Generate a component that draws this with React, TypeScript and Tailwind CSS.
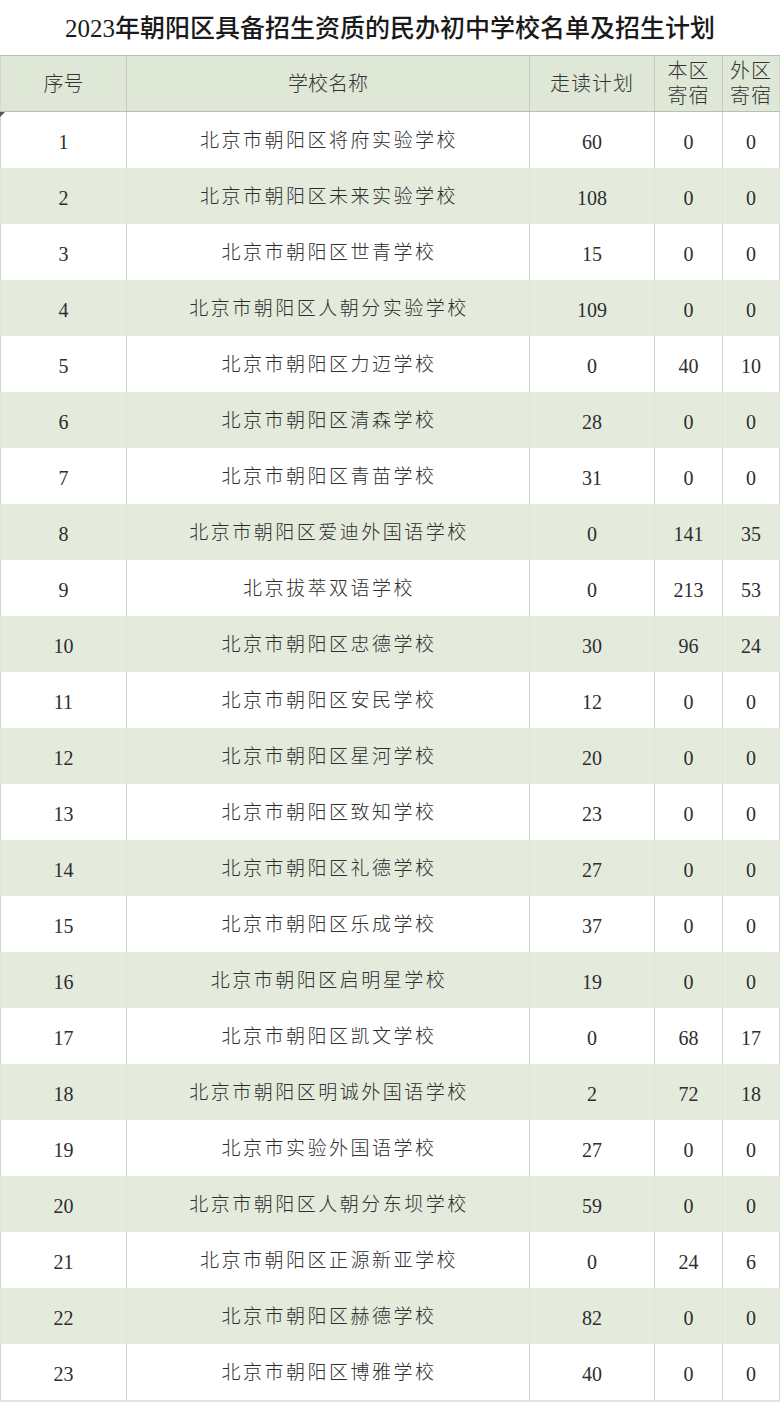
import React from "react";

type Row = [number, string, number, number, number];

const ROWS: Row[] = [
  [1, "北京市朝阳区将府实验学校", 60, 0, 0],
  [2, "北京市朝阳区未来实验学校", 108, 0, 0],
  [3, "北京市朝阳区世青学校", 15, 0, 0],
  [4, "北京市朝阳区人朝分实验学校", 109, 0, 0],
  [5, "北京市朝阳区力迈学校", 0, 40, 10],
  [6, "北京市朝阳区清森学校", 28, 0, 0],
  [7, "北京市朝阳区青苗学校", 31, 0, 0],
  [8, "北京市朝阳区爱迪外国语学校", 0, 141, 35],
  [9, "北京拔萃双语学校", 0, 213, 53],
  [10, "北京市朝阳区忠德学校", 30, 96, 24],
  [11, "北京市朝阳区安民学校", 12, 0, 0],
  [12, "北京市朝阳区星河学校", 20, 0, 0],
  [13, "北京市朝阳区致知学校", 23, 0, 0],
  [14, "北京市朝阳区礼德学校", 27, 0, 0],
  [15, "北京市朝阳区乐成学校", 37, 0, 0],
  [16, "北京市朝阳区启明星学校", 19, 0, 0],
  [17, "北京市朝阳区凯文学校", 0, 68, 17],
  [18, "北京市朝阳区明诚外国语学校", 2, 72, 18],
  [19, "北京市实验外国语学校", 27, 0, 0],
  [20, "北京市朝阳区人朝分东坝学校", 59, 0, 0],
  [21, "北京市朝阳区正源新亚学校", 0, 24, 6],
  [22, "北京市朝阳区赫德学校", 82, 0, 0],
  [23, "北京市朝阳区博雅学校", 40, 0, 0],
];

const FONT = "font-['Liberation_Serif','Noto_Sans_CJK_SC',serif]";
const COLS = "grid grid-cols-[127px_403px_125px_68px_57px]";

export default function App() {
  return (
    <div className={`w-[780px] h-[1402px] bg-white text-[#2e2e2e] ${FONT}`}>
      {/* Title */}
      <div className="h-[55px] flex items-center justify-center pt-[2px]">
        <h1 className="text-[25px] font-medium text-[#1a1a1a]">
          2023年朝阳区具备招生资质的民办初中学校名单及招生计划
        </h1>
      </div>

      {/* Header */}
      <div
        className={`${COLS} h-[57px] bg-[#dfe7d7] border-y border-[#b9bdb5] text-[20px] font-light text-[#333]`}
      >
        <div className="flex items-center justify-center border-r border-[#c6cbc1] border-l border-l-[#d5d9d0]">
          序号
        </div>
        <div className="flex items-center justify-center border-r border-[#c6cbc1]">
          学校名称
        </div>
        <div className="flex items-center justify-center border-r border-[#c6cbc1] tracking-[1px]">
          走读计划
        </div>
        <div className="flex flex-col items-center justify-center border-r border-[#c6cbc1] leading-[25px] tracking-[1px]">
          <span>本区</span>
          <span>寄宿</span>
        </div>
        <div className="flex flex-col items-center justify-center leading-[25px] tracking-[1px] border-r border-[#d5d9d0]">
          <span>外区</span>
          <span>寄宿</span>
        </div>
      </div>

      {/* Body */}
      <div className="relative">
        <span className="absolute left-0 top-0 w-0 h-0 border-t-[5px] border-r-[5px] border-t-[#555] border-r-transparent" />
        {ROWS.map(([n, name, walk, local, outer]) => {
          const shaded = n % 2 === 0;
          const cell = `flex items-center justify-center pt-[3px] border-r ${
            shaded ? "border-[#dde5d6]" : "border-[#d3d3d3]"
          }`;
          return (
            <div
              key={n}
              className={`${COLS} h-[56px] text-[20px] ${shaded ? "bg-[#e4ebdd]" : "bg-white"}`}
            >
              <div className={`${cell} border-l`}>{n}</div>
              <div className={`${cell} text-[19px] font-light tracking-[2.5px] pl-[2px]`}>{name}</div>
              <div className={cell}>{walk}</div>
              <div className={cell}>{local}</div>
              <div className={cell}>{outer}</div>
            </div>
          );
        })}
        <div className="h-[2px] bg-[#e2e2e2]" />
      </div>
    </div>
  );
}
